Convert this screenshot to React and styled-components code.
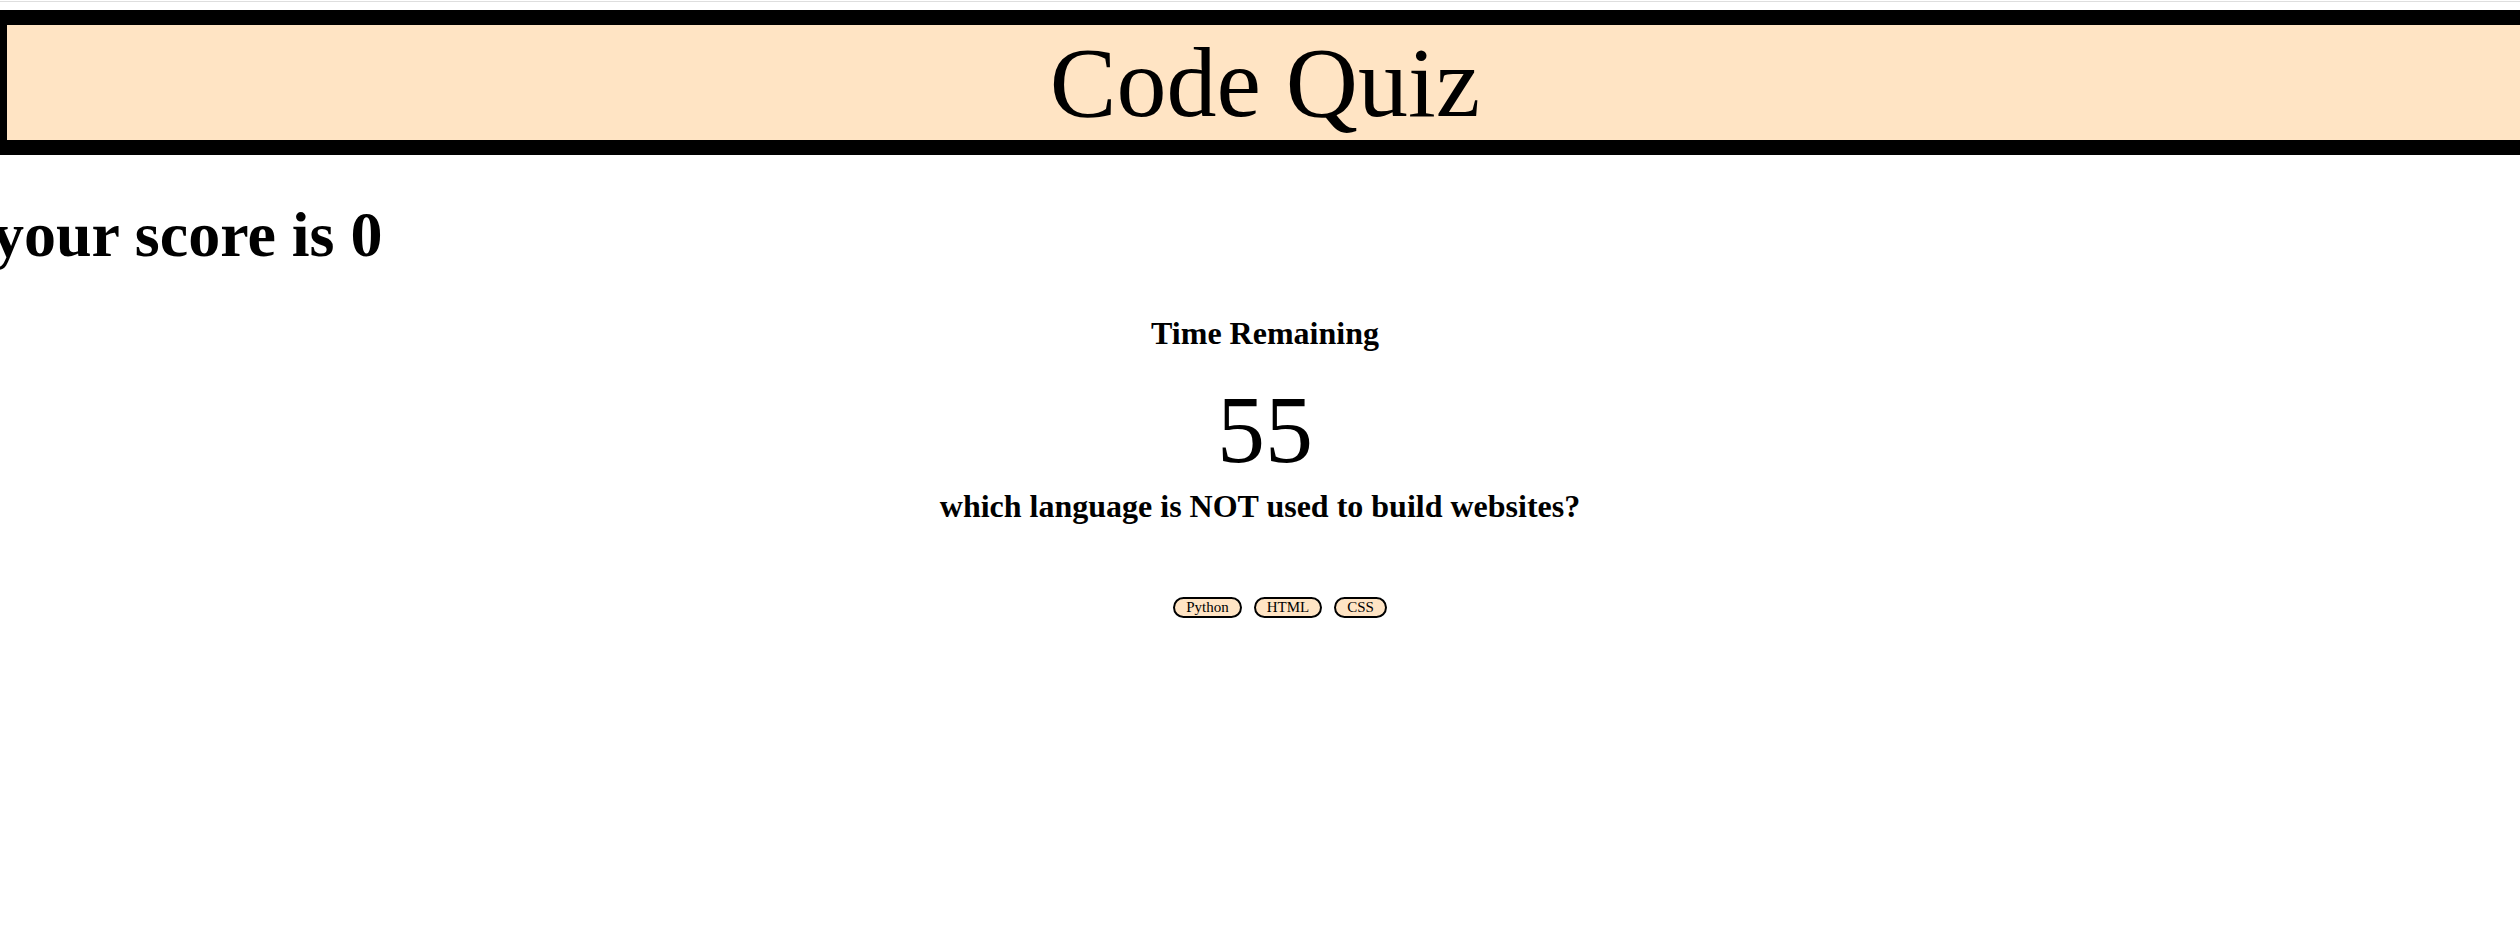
import React from "react";
import styled, { createGlobalStyle } from "styled-components";

const GlobalStyle = createGlobalStyle`
  body {
    margin: 0;
    background: #fff;
    color: #000;
    font-family: "Liberation Serif", "Times New Roman", serif;
    overflow-x: hidden;
  }
`;

const TopRule = styled.div`
  height: 1px;
  margin-top: 1px;
  background: #dedede;
`;

const Page = styled.div`
  margin: 0 -18px 0 -8px;
`;

const Header = styled.header`
  margin-top: 8px;
  border: 15px solid #000;
  background: bisque;
`;

const Title = styled.h1`
  margin: 0;
  font-size: 100px;
  font-weight: normal;
  line-height: 115px;
  text-align: center;
`;

const Score = styled.h1`
  margin: 43px 0;
  font-size: 64px;
  font-weight: bold;
`;

const Quiz = styled.section`
  text-align: center;
`;

const TimeLabel = styled.h2`
  margin: 0;
  font-size: 32px;
  font-weight: bold;
`;

const Timer = styled.div`
  margin-top: 22px;
  font-size: 96px;
`;

const Question = styled.h2`
  margin: 3px 0 0;
  padding-right: 10px;
  font-size: 32px;
  font-weight: bold;
`;

const Choices = styled.div`
  display: flex;
  justify-content: center;
  gap: 12px;
  margin-top: 72px;
  padding-left: 30px;
`;

const Choice = styled.button`
  font-family: "Liberation Serif", "Times New Roman", serif;
  font-size: 15px;
  line-height: 17px;
  color: #000;
  background: bisque;
  border: 2px solid #000;
  border-radius: 12px;
  padding: 0 11px;
  cursor: pointer;
`;

const choices = ["Python", "HTML", "CSS"];

export default function App() {
  return (
    <>
      <GlobalStyle />
      <TopRule />
      <Page>
        <Header>
          <Title>Code Quiz</Title>
        </Header>
        <Score>your score is 0</Score>
        <Quiz>
          <TimeLabel>Time Remaining</TimeLabel>
          <Timer>55</Timer>
          <Question>which language is NOT used to build websites?</Question>
          <Choices>
            {choices.map((c) => (
              <Choice key={c}>{c}</Choice>
            ))}
          </Choices>
        </Quiz>
      </Page>
    </>
  );
}
